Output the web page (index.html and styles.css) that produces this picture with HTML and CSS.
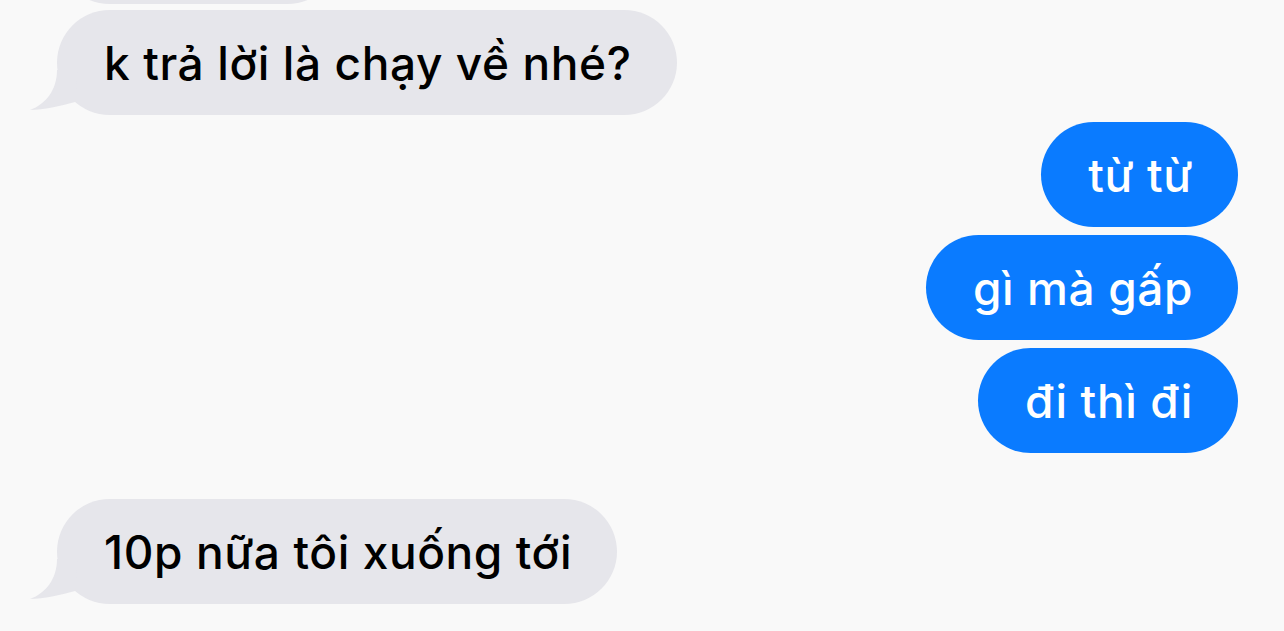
FILE: index.html
```html
<!DOCTYPE html>
<html lang="vi">
<head>
  <meta charset="UTF-8" />
  <title>Tin nhắn</title>
  <meta name="viewport" content="width=device-width, initial-scale=1.0" />
  <link rel="stylesheet" href="styles.css">
</head>
<body>

<div class="thread">
  <div class="group in">
    <div class="bubble prev"></div>
    <div class="bubble tail">k trả lời là chạy về nhé?
      <svg class="tail-shape" width="50" height="45" viewBox="0 0 50 45"><path d="M29 0 C29 20 18 34 2 40 C16 40 32 36 47 32 L50 0 Z"/></svg>
    </div>
  </div>

  <div class="group out">
    <div class="bubble">từ từ</div>
    <div class="bubble">gì mà gấp</div>
    <div class="bubble">đi thì đi</div>
  </div>

  <div class="group in later">
    <div class="bubble tail">10p nữa tôi xuống tới
      <svg class="tail-shape" width="50" height="45" viewBox="0 0 50 45"><path d="M29 0 C29 20 18 34 2 40 C16 40 32 36 47 32 L50 0 Z"/></svg>
    </div>
  </div>
</div>

</body>
</html>
```

FILE: styles.css
```css
* { box-sizing: border-box; }
body {
  margin: 0;
  font-family: Inter, 'Noto Sans', sans-serif;
  background-color: #f9f9f9;
  color: #000;
  height: 100vh;
  overflow: hidden;
}

.thread {
  display: flex;
  flex-direction: column;
  gap: 7px;
  padding: 0 46px 0 57px;
}

.group {
  display: flex;
  flex-direction: column;
  gap: 8px;
}

.group.in { align-items: flex-start; }
.group.out { align-items: flex-end; }
.group.later { margin-top: 39px; }

.bubble {
  position: relative;
  height: 105px;
  display: flex;
  align-items: center;
  padding: 0 45px 0 47px;
  border-radius: 53px;
  font-size: 46px;
  font-weight: 500;
  letter-spacing: 0.6px;
  white-space: nowrap;
}

.in .bubble {
  background: #e6e6eb;
  color: #000;
}

.out .bubble {
  background: #0a7bff;
  color: #fff;
}

.bubble.prev {
  width: 283px;
  margin-top: -101px;
  margin-bottom: -2px;
}

.tail-shape {
  position: absolute;
  left: -29px;
  bottom: 0;
  fill: #e6e6eb;
}
```
